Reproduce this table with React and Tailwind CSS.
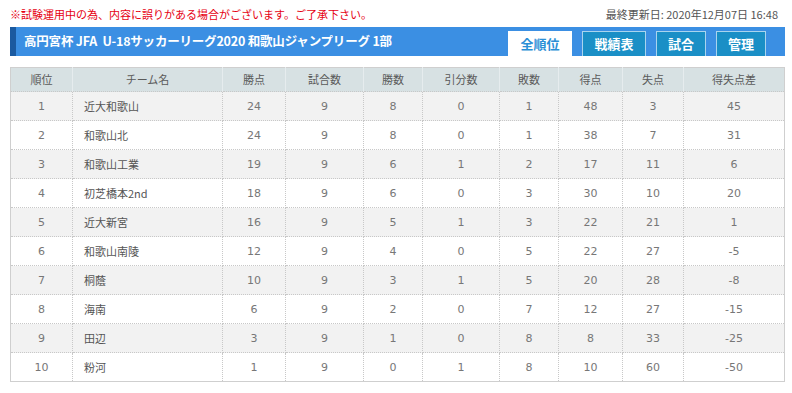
import React from "react";

const rows = [
  [1, "近大和歌山", 24, 9, 8, 0, 1, 48, 3, 45],
  [2, "和歌山北", 24, 9, 8, 0, 1, 38, 7, 31],
  [3, "和歌山工業", 19, 9, 6, 1, 2, 17, 11, 6],
  [4, "初芝橋本2nd", 18, 9, 6, 0, 3, 30, 10, 20],
  [5, "近大新宮", 16, 9, 5, 1, 3, 22, 21, 1],
  [6, "和歌山南陵", 12, 9, 4, 0, 5, 22, 27, -5],
  [7, "桐蔭", 10, 9, 3, 1, 5, 20, 28, -8],
  [8, "海南", 6, 9, 2, 0, 7, 12, 27, -15],
  [9, "田辺", 3, 9, 1, 0, 8, 8, 33, -25],
  [10, "粉河", 1, 9, 0, 1, 8, 10, 60, -50],
];

const heads = ["順位", "チーム名", "勝点", "試合数", "勝数", "引分数", "敗数", "得点", "失点", "得失点差"];

export default function App() {
  return (
    <div className="w-[792px] h-[393px] overflow-hidden bg-white px-[10px] pt-[7px] font-['Noto_Sans_CJK_JP',sans-serif]">
      <div className="flex justify-between items-center h-[15px]">
        <span className="text-[11px] text-[#e60012] leading-none">※試験運用中の為、内容に誤りがある場合がございます。ご了承下さい。</span>
        <span className="text-[11px] text-[#555] leading-none mr-[4px]">最終更新日: 2020年12月07日 16:48</span>
      </div>
      <div className="mt-[5px] h-[29px] w-[775px] bg-[#3b8fe3] border-l-[6px] border-[#1b5aa0] flex items-end justify-between">
        <div className="self-center text-white font-bold text-[12.5px] tracking-[-0.2px] pl-[8px] leading-none">高円宮杯 JFA&nbsp; U-18サッカーリーグ2020 和歌山ジャンプリーグ 1部</div>
        <div className="flex gap-[10px] mr-[19px]">
          <div className="w-[64px] h-[25px] bg-white text-[#2b8fd6] font-bold text-[13px] flex items-center justify-center">全順位</div>
          <div className="w-[64px] h-[25px] bg-[#1a8fc6] border border-[#a9d4ee] border-b-0 text-white font-bold text-[13px] flex items-center justify-center">戦績表</div>
          <div className="w-[50px] h-[25px] bg-[#1a8fc6] border border-[#a9d4ee] border-b-0 text-white font-bold text-[13px] flex items-center justify-center">試合</div>
          <div className="w-[50px] h-[25px] bg-[#1a8fc6] border border-[#a9d4ee] border-b-0 text-white font-bold text-[13px] flex items-center justify-center">管理</div>
        </div>
      </div>
      <table className="mt-[11px] w-[774px] border-collapse border border-[#cfcfcf] text-[11px] text-[#777] table-fixed">
        <colgroup>
          <col className="w-[62px]" />
          <col className="w-[150px]" />
          <col className="w-[63px]" />
          <col className="w-[78px]" />
          <col className="w-[59px]" />
          <col className="w-[77px]" />
          <col className="w-[59px]" />
          <col className="w-[64px]" />
          <col className="w-[61px]" />
          <col className="w-[101px]" />
        </colgroup>
        <thead>
          <tr className="h-[24px] bg-[#d7e1e3]">
            {heads.map((h, i) => (
              <th key={i} className="font-normal text-[#5a5a5a] text-[11px] leading-none whitespace-nowrap border-r border-[#e6ecee] last:border-r-0 p-0">{h}</th>
            ))}
          </tr>
        </thead>
        <tbody className="font-['DejaVu_Sans','Noto_Sans_CJK_JP',sans-serif]">
          {rows.map((r, ri) => (
            <tr key={ri} className={`h-[29px] ${ri % 2 === 0 ? "bg-[#f2f2f2]" : "bg-white"}`}>
              {r.map((c, ci) => (
                <td
                  key={ci}
                  className={`p-0 leading-none border border-dotted border-[#c8c8c8] ${ci === 1 ? "text-left pl-[11px] font-['Noto_Sans_CJK_JP',sans-serif] text-[#555]" : "text-center"}`}
                >
                  {c}
                </td>
              ))}
            </tr>
          ))}
        </tbody>
      </table>
    </div>
  );
}
